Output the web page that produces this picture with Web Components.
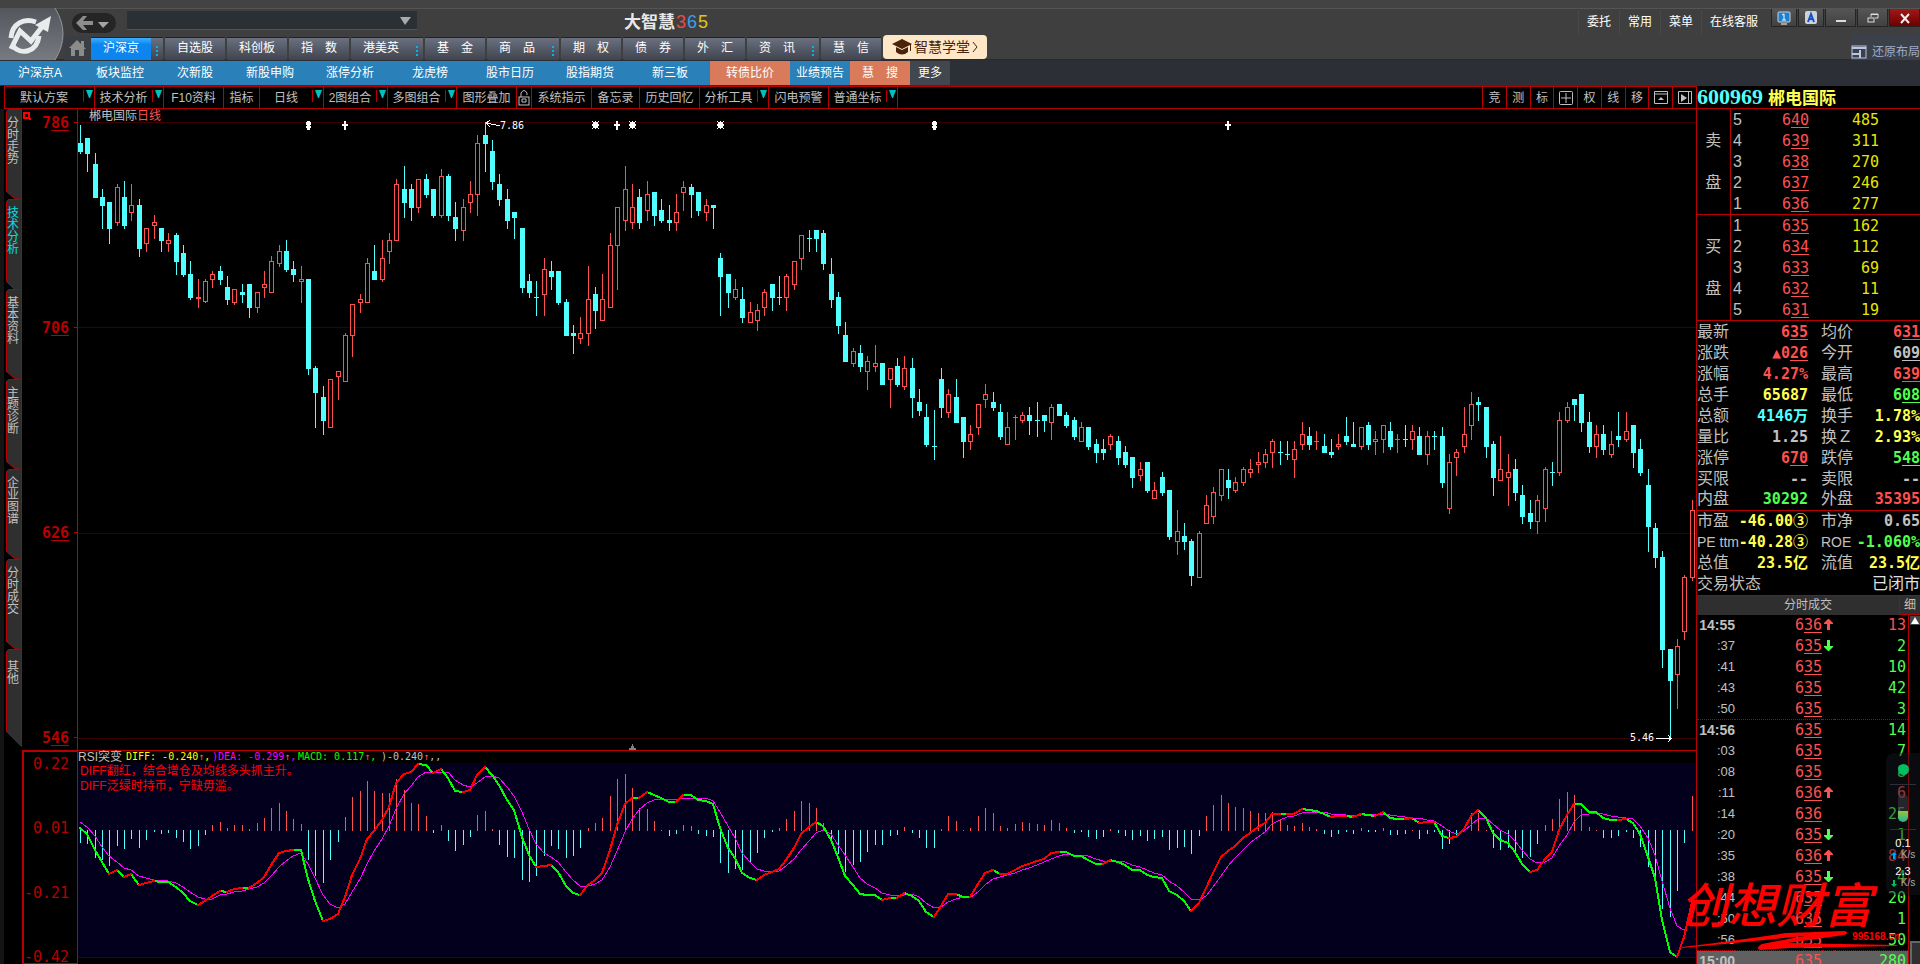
<!DOCTYPE html>
<html lang="zh-CN">
<head>
<meta charset="utf-8">
<title>大智慧365</title>
<style>
  * { box-sizing: border-box; }
  body {
    margin: 0;
    background: #000;
    font: 12px/14px "Liberation Sans", "Noto Sans CJK SC", sans-serif;
    color: #c0c0c0;
    --line: #b80000;
    --up: #ff5050;
    --down: #50ff50;
    --cyan: #50ffff;
    --mono: "DejaVu Sans Mono", "Noto Sans CJK SC", monospace;
  }
</style>
</head>
<body>
<trade-app></trade-app>

<script>
  const base = `
    <style>
      * { box-sizing: border-box; }
      button, select { font: inherit; color: inherit; background: none; border: 0; padding: 0; margin: 0; white-space: nowrap; }
      a { color: inherit; text-decoration: none; white-space: nowrap; }
    </style>`;

  class BaseElement extends HTMLElement {
    constructor() {
      super();
      this.attachShadow({ mode: "open" });
    }
    connectedCallback() {
      this.shadowRoot.innerHTML = base + this.render();
    }
  }

  // Prices are quoted in cents, the last two digits are underlined
  const price = v => `${v[0]}<u>${v.slice(1)}</u>`;

  /* ---------- header ---------- */

  class NavTab extends BaseElement {
    render() {
      const on = this.hasAttribute("active");
      const more = this.hasAttribute("more");
      return `
        <style>
          :host { display: flex; width: ${more ? 72 : 60}px; height: 23px; border-top: 1px solid #222;
            background: linear-gradient(#6b7080, #40444f); color: #fff; }
          button { flex: 1; padding-bottom: 2px; white-space: pre; ${on ? "background: linear-gradient(#3eb0ff, #0c86ee 30%);" : ""} }
          i { width: 12px; align-self: center; height: 10px; margin-top: 3px;
            background: repeating-linear-gradient(#00b4f0 0 2px, transparent 2px 4px) center / 2px 10px no-repeat; }
        </style>
        <button type="button"><slot></slot></button>${more ? "<i></i>" : ""}`;
    }
  }

  class TitleBar extends BaseElement {
    render() {
      return `
        <style>
          :host { display: flex; height: 60px; padding-top: 8px; background: #3f3f3f; border-bottom: 1px solid #2a2a2a;
            box-shadow: inset 0 8px #434343, inset 0 9px #555; color: #fff; }
          .logo { flex: none; width: 64px; height: 52px; }
          .main { flex: 1; display: flex; flex-direction: column; justify-content: space-between; min-width: 0; }
          .top { display: flex; align-items: flex-start; }
          .back { width: 44px; height: 20px; margin: 5px 0 0 8px; border-radius: 10px; background: #252525; }
          .back svg { display: block; }
          .combo { position: relative; width: 290px; margin: 3px 0 0 11px; }
          select { appearance: none; display: block; width: 100%; height: 19px; background: #2b3035; border-bottom: 1px solid #50555a; }
          .combo svg { position: absolute; right: 6px; top: 6px; pointer-events: none; }
          h1 { margin: 4px auto 0 207px; font-size: 17px; line-height: 20px; font-weight: 700; color: #e8e8e8; }
          h1 b { font-weight: 400; margin-left: 1px; font-size: 18px; }
          .menu { display: flex; margin-right: 5px; }
          .menu a { padding: 2px 8px 0; line-height: 24px; border-left: 1px solid #484848; }
          .win { display: flex; gap: 1px; padding: 1px 0 0; }
          .win button { width: 31px; height: 18px; border: 1px solid #252525; border-top: 0; background: linear-gradient(#555, #414141); }
          .win .sm { width: 26px; }
          .win .close { background: linear-gradient(#a01818, #6c0000); }
          .win svg { display: block; margin: auto; }
          .tabs { display: flex; align-items: flex-end; gap: 2px; }
          .home { width: 27px; height: 24px; background: #3a3d42; margin-right: -2px; }
          .school { display: flex; align-items: center; justify-content: center; gap: 2px; width: 104px; height: 24px; margin-bottom: 1px;
            border-radius: 4px; background: #fee7c6; color: #4a230a; font-size: 14px; }
          .layout { display: flex; align-items: center; gap: 5px; margin-left: auto; height: 26px; padding-top: 9px; color: #9eabc9; background: #3b4049; }
        </style>
        <svg class="logo" viewBox="0 0 64 52">
          <defs><linearGradient id="g" x1="0" y1="0" x2="0" y2="1"><stop offset="0" stop-color="#53575d"/><stop offset="1" stop-color="#777b81"/></linearGradient></defs>
          <path d="M0 0H55Q71 26 55 52H0Z" fill="url(#g)"/>
          <path d="M55 0Q71 26 55 52" fill="none" stroke="#92959a"/>
          <g fill="none" stroke="#e9eaec" stroke-width="5">
            <path d="M36 14C24 10 12 15 11 30"/>
            <path d="M13 38C20 47 37 45 39 28"/>
            <path d="M11 41L20 23L31 33L45 15"/>
          </g>
          <path d="M51 8L48 24L35 17Z" fill="#e9eaec"/>
        </svg>
        <div class="main">
          <div class="top">
            <button class="back" type="button" aria-label="后退"><svg width="44" height="20">
              <path d="M4 10L11 3H15L11 8H21V12H11L15 17H11Z" fill="#8d8d8d"/><path d="M26 9H37L31 15Z" fill="#a5a5a5"/></svg></button>
            <label class="combo"><select aria-label="地址"><option></option></select>
              <svg width="11" height="8"><path d="M0 0H11L5 8Z" fill="#aaa"/></svg></label>
            <h1>大智慧<b style="color:#e0504b">3</b><b style="color:#3ba0e6">6</b><b style="color:#e3c417">5</b></h1>
            <nav class="menu"><a href="#">委托</a><a href="#">常用</a><a href="#">菜单</a><a href="#">在线客服</a></nav>
            <div class="win">
              <button class="sm" type="button" aria-label="显示器"><svg width="14" height="14"><rect x="1" y="1" width="12" height="10" rx="1" fill="#1c7fd0" stroke="#c8d2dc"/><path d="M5 4L7 3V9M5 9H9M4 13H10" stroke="#fff" fill="none"/></svg></button>
              <button class="sm" type="button" aria-label="字体"><svg width="14" height="14"><rect x="1" y="0" width="12" height="13" rx="2" fill="#ccd2d8"/><path d="M4 11L7 3L10 11M5 8H9" stroke="#1450c8" stroke-width="2" fill="none"/></svg></button>
              <button type="button" aria-label="最小化"><svg width="12" height="12"><path d="M1 9H11" stroke="#ddd" stroke-width="2"/></svg></button>
              <button type="button" aria-label="还原"><svg width="12" height="12" fill="none" stroke="#ddd"><path d="M4 5V2H11V6H8M4 2.5H11"/><rect x="1" y="6" width="6" height="4"/></svg></button>
              <button class="close" type="button" aria-label="关闭"><svg width="12" height="12"><path d="M2 2L10 11M10 2L2 11" stroke="#eee" stroke-width="2"/></svg></button>
            </div>
          </div>
          <div class="tabs">
            <button class="home" type="button" aria-label="首页"><svg width="27" height="24"><path d="M5 12L13 4L17 8V5H20V11L22 13H20V20H15V14H11V20H7V12Z" fill="#8b8b8b"/></svg></button>
            <nav-tab active more>沪深京</nav-tab><nav-tab>自选股</nav-tab><nav-tab>科创板</nav-tab><nav-tab>指　数</nav-tab>
            <nav-tab more>港美英</nav-tab><nav-tab>基　金</nav-tab><nav-tab more>商　品</nav-tab><nav-tab>期　权</nav-tab>
            <nav-tab>债　券</nav-tab><nav-tab>外　汇</nav-tab><nav-tab more>资　讯</nav-tab><nav-tab>慧　信</nav-tab>
            <button class="school" type="button"><svg width="20" height="16"><path d="M0 5L10 0L20 5L10 10Z" fill="#4a230a"/><path d="M4 8L10 11L16 8V13Q10 18 4 13ZM18 5H19V12H18Z" fill="#4a230a"/></svg>智慧学堂<svg width="6" height="12"><path d="M1 1L5 6L1 11" fill="none" stroke="#4a230a"/></svg></button>
            <a class="layout" href="#"><svg width="16" height="14" fill="none" stroke="#b9c6e6"><rect x="1" y="1" width="14" height="12"/><path d="M1 3H15M1 9H9M9 5V13" stroke-width="2"/></svg>还原布局</a>
          </div>
        </div>`;
    }
  }

  class ChannelBar extends BaseElement {
    render() {
      const items = [["沪深京A"], ["板块监控"], ["次新股", 70], ["新股申购"], ["涨停分析"], ["龙虎榜"], ["股市日历"], ["股指期货"],
        ["新三板"], ["转债比价", 80, "hot"], ["业绩预告", 60], ["慧　搜", 60, "hot"], ["更多", 40, "more"]];
      return `
        <style>
          :host { display: flex; height: 26px; padding: 1px 0; background: #2c3036; color: #fff; }
          a { background: #2a80b9; line-height: 24px; text-align: center; }
          .hot { background: #d97b5b; }
          .more { background: #42464e; }
        </style>
        ${items.map(([t, w = 80, c = ""]) => `<a href="#" class="${c}" style="width:${w}px">${t}</a>`).join("")}`;
    }
  }

  /* ---------- workspace ---------- */

  class ChartToolbar extends BaseElement {
    render() {
      const items = [["默认方案", 90, 1], ["技术分析", 69, 1], ["F10资料", 60], ["指标", 36], ["日线", 64, 1], ["2图组合", 64, 1], ["多图组合", 69, 1],
        ["图形叠加", 60], ["lock", 15], ["系统指示", 60], ["备忘录", 48], ["历史回忆", 60], ["分析工具", 69, 1], ["闪电预警", 60], ["普通坐标", 69, 1]];
      const lock = `<svg width="12" height="18" fill="none" stroke="#c0c0c0"><rect x="1" y="8" width="10" height="8"/><path d="M3 8V4Q6 -1 9 4V6M4 10H8V13H4Z"/></svg>`;
      const grid = `<svg width="14" height="14" fill="none" stroke="#c0c0c0"><rect x=".5" y=".5" width="13" height="13" rx="1"/><path d="M7 2V12M2 7H12"/></svg>`;
      const top = `<svg width="14" height="14" fill="none" stroke="#c0c0c0"><path d="M.5 .5H13.5V12.5H.5ZM0 3H14"/><path d="M4 9H10L7 6Z" fill="#c0c0c0" stroke="none"/></svg>`;
      const side = `<svg width="14" height="14" fill="none" stroke="#c0c0c0"><path d="M.5 .5H13.5V12.5H.5ZM10.5 0V13"/><path d="M3 3V11L9 7Z" fill="#c0c0c0" stroke="none"/></svg>`;
      return `
        <style>
          :host { display: flex; height: 23px; margin-left: 4px; border: 1px solid var(--line); border-right: 0; }
          .cell { display: flex; align-items: center; border-right: 1px solid var(--line); }
          .cell button { flex: 1; height: 21px; padding-top: 1px; }
          .cell svg { display: block; margin: auto; }
          .arrow { width: 11px; height: 12px; margin-bottom: 3px; border-left: 1px solid var(--line); padding-left: 1px; }
          .right { display: flex; width: 214px; margin-left: auto; border-left: 1px solid var(--line); }
          .right .cell { flex: 1; }
          .right .cell:last-child { border-right: 0; }
        </style>
        ${items.map(([t, w, m]) => `<div class="cell" style="width:${w}px"><button type="button"${t === "lock" ? ' aria-label="锁定"' : ""}>${t === "lock" ? lock : t}</button>${
          m ? '<span class="arrow"><svg width="7" height="8"><path d="M0 0H7L4 8H3Z" fill="#00c0c0"/></svg></span>' : ""}</div>`).join("")}
        <div class="right">${["竞", "测", "标", grid, "权", "线", "移", top, side].map(t => `<div class="cell"><button type="button">${t}</button></div>`).join("")}</div>`;
    }
  }

  class SideTabs extends BaseElement {
    render() {
      const tabs = ["分时走势", "技术分析", "基本资料", "主题诊断", "企业图谱", "分时成交", "其他"];
      const long = "M15.5 97.5L.5 82.5V2.5L2.5 .5H15.5Z";
      const short = "M15.5 90.5L8.5 89.5L.5 82.5V2.5L2.5 .5H15.5Z";
      return `
        <style>
          :host { display: block; width: 22px; padding-left: 6px; background: linear-gradient(90deg, #141414 4px, #000 4px); }
          button { display: block; position: relative; width: 16px; height: 90px; padding: 7px 2px 0 1px; line-height: 12px; text-align: left; }
          button span { display: block; position: relative; white-space: normal; width: 12px; height: 82px; }
          button:last-child { height: 98px; }
          svg { position: absolute; left: 0; top: 0; overflow: visible; }
          .on { color: #00e0e0; }
        </style>
        ${tabs.map((t, i) => `<button type="button" class="${i === 1 ? "on" : ""}"><svg width="16" height="98"><path d="${
          i === 1 || i === 6 ? long : short}" fill="#2f2f2f" stroke="#b80000"/></svg><span>${t}</span></button>`).join("")}`;
    }
  }

  // type, high, body top, body bottom, low; three units to a pixel, measured down the pane
  const candles = `c75,129,155,162 c114,114,162,216 c159,192,293,293 c267,291,318,387 c306,306,387,432 r252,262,368,378 c243,291,378,387 r252,316,338,363
    c297,315,447,471 r384,385,431,456 r345,367,377,417 c384,384,423,456 r399,421,431,456 c399,405,486,525 c435,459,525,531 c483,522,594,600
    r537,592,598,624 r537,544,607,608 r513,523,539,564 c498,513,540,555 c528,561,600,615 r567,568,608,615 c552,576,585,609 c552,552,624,654
    r576,577,623,639 r513,553,563,594 r468,484,578,578 r435,454,491,501 c420,453,510,516 c483,507,525,546 r498,538,545,609 c537,537,807,825
    c798,804,879,984 c858,891,963,1002 r837,838,983,983 r813,814,830,900 r699,706,845,845 r612,613,707,771 r582,598,608,639 r474,490,608,608
    c435,513,540,540 r420,475,539,546 r399,421,455,492 r237,253,422,422 c198,267,309,354 c252,267,324,363 r237,238,323,339 c222,237,285,294
    c267,267,348,354 r207,229,347,354 c222,228,348,363 c306,351,387,423 r297,322,392,423 r243,283,308,339 r105,130,284,348 c66,105,132,216
    c120,153,246,270 c222,252,300,318 c267,297,363,387 c336,336,354,417 c384,384,564,579 c522,543,579,594 c543,591,594,648 r474,508,584,648
    c483,513,531,570 c513,513,609,615 c597,606,708,708 c675,699,708,762 r651,700,716,732 r498,598,701,738 c561,582,633,687 r522,598,662,662
    r399,436,623,623 r321,322,437,570 r198,268,362,393 r252,322,368,387 c267,291,369,387 r243,283,332,363 c276,276,348,378 c297,330,363,369
    c315,360,369,393 r282,337,368,393 r243,262,278,333 c252,261,285,354 c276,276,333,348 r297,316,338,363 c315,315,324,387 c459,474,531,648
    c522,522,579,624 r537,568,593,600 c561,597,654,669 r606,637,668,668 r612,631,662,693 r567,577,623,648 c552,552,594,633 c528,591,594,615
    r522,529,593,633 r483,484,554,570 r405,406,476,510 c390,414,417,456 c390,390,417,456 c390,399,492,510 c474,522,600,624 c576,591,678,702
    c666,705,786,786 r744,754,791,801 c735,759,801,816 r768,784,815,870 r735,790,800,816 c789,789,855,855 r804,805,839,924 c774,798,855,861
    r768,805,860,870 c774,804,894,954 c867,906,934,948 c912,951,1032,1038 c930,1035,1038,1077 c804,837,924,954 r867,883,938,954 c837,891,969,969
    c951,951,1023,1071 r975,1000,1022,1047 r912,913,983,1002 r852,883,899,924 c876,906,924,933 c912,936,1008,1017 r936,982,1031,1031 r945,951,954,1017
    r936,946,962,969 c921,945,963,1002 c906,960,963,1008 c945,945,963,993 r912,922,968,1017 c912,912,948,948 c936,945,978,984 c951,960,1008,1017
    r966,982,1022,1022 c981,981,1038,1047 c1014,1029,1056,1086 c1014,1044,1056,1077 r999,1006,1031,1047 c1005,1020,1071,1092 c1035,1053,1092,1101 c1068,1068,1131,1161
    r1083,1104,1125,1140 c1083,1083,1170,1176 r1143,1167,1194,1194 c1113,1128,1176,1185 c1167,1167,1308,1317 r1227,1290,1323,1362 c1266,1305,1323,1347 c1314,1320,1425,1455
    r1290,1296,1431,1431 r1182,1212,1269,1269 r1158,1173,1248,1269 r1104,1104,1185,1200 c1104,1137,1161,1194 r1128,1143,1170,1176 r1098,1104,1146,1155 r1074,1104,1116,1131
    r1053,1083,1092,1116 r1044,1059,1086,1101 r1014,1020,1056,1101 c1020,1053,1056,1092 c1020,1059,1062,1077 r1020,1044,1077,1131 r966,999,1032,1047 c981,1005,1032,1047
    r990,1020,1023,1047 c999,1035,1056,1056 c1014,1053,1062,1071 r999,1029,1038,1047 c951,1005,1023,1032 c966,1029,1038,1038 r981,982,1038,1047 c966,975,1032,1047
    r990,1014,1023,1062 r975,976,1017,1056 c966,990,1038,1047 r999,1014,1017,1056 c975,1014,1017,1038 r975,990,1017,1047 c981,1005,1062,1062 r990,1005,1062,1092
    c990,1005,1008,1047 c981,1005,1146,1161 r1059,1083,1224,1239 r1044,1053,1071,1125 r921,999,1038,1056 r876,912,978,1017 c891,906,915,963 c921,921,1038,1071
    c1020,1029,1131,1185 r1005,1104,1140,1140 r1059,1113,1131,1215 c1074,1104,1176,1200 c1152,1182,1248,1269 c1197,1236,1263,1284 r1182,1197,1263,1299 r1098,1104,1224,1263
    c1083,1113,1116,1155 r936,960,1116,1125 r906,921,963,969 c897,897,915,963 c882,882,969,993 c936,966,1038,1056 r975,999,1038,1071 c975,999,1047,1062
    r990,1029,1062,1071 c936,1005,1017,1038 r936,990,1017,1023 c975,975,1056,1101 c1014,1044,1116,1125 c1104,1152,1278,1353 c1266,1281,1371,1401 c1350,1368,1647,1701
    c1644,1644,1740,1912 r1614,1635,1722,1824 r1422,1428,1593,1617 r1197,1227,1431,1440`
    .trim().split(/\s+/).map(s => [s[0], ...s.slice(1).split(",").map(Number)]);

  const macd = [-39,-42,-84,-90,-108,-48,-57,-27,-54,-30,-6,-12,-9,-24,-36,-57,-48,-15,17,26,8,17,17,5,23,38,68,83,59,35,20,-90,-138,-159,-90,-36,
    41,101,119,149,119,113,113,155,122,83,80,44,-9,17,-33,-63,-45,-21,47,59,5,-45,-81,-84,-150,-156,-138,-78,-48,-57,-84,-78,-54,8,23,38,104,155,170,128,
    70,67,31,4,-18,-12,19,16,-12,-18,-21,-99,-129,-117,-120,-99,-69,-24,-6,10,37,61,91,85,70,25,-39,-73,-126,-105,-96,-66,-45,-45,-18,-15,13,-9,-24,-54,-54,
    7,46,31,4,10,46,70,55,16,10,22,28,25,22,19,34,25,10,-9,-6,-21,-27,-21,7,-9,-18,-30,-18,-33,-27,-21,-60,-54,-51,-72,-18,46,79,109,85,73,70,61,55,55,58,
    37,19,16,25,13,7,-12,-21,-12,-6,-12,10,-6,-6,10,-15,-15,-12,2,-27,-12,-6,-57,-42,-15,13,55,55,4,-54,-60,-54,-66,-84,-81,-42,19,37,97,118,109,67,13,4,
    -24,-24,-18,-6,-24,-51,-111,-140,-237,-261,-183,-39,106];

  const diff = [265,282,330,365,402,390,411,403,435,430,422,426,427,442,458,483,495,484,467,453,457,448,444,444,430,410,375,338,332,330,330,417,482,543,538,
    523,470,405,358,298,273,240,200,128,102,96,71,75,99,87,113,152,156,151,105,80,104,135,180,210,290,345,381,377,375,395,438,460,465,435,420,400,330,255,192,174,
    174,156,164,175,186,186,165,165,179,183,192,265,323,353,398,414,420,406,397,387,360,325,283,260,245,258,300,350,409,434,461,465,465,480,473,473,458,467,482,515,
    531,498,462,461,470,470,433,400,389,402,401,389,377,371,364,357,340,335,336,348,348,359,371,372,361,367,376,390,391,406,412,415,454,466,482,514,489,445,400,352,
    334,317,294,279,262,248,223,222,222,221,206,209,212,221,231,229,228,231,221,226,229,217,233,236,237,233,248,247,245,287,295,290,267,228,209,233,278,299,310,337,
    373,397,391,357,335,270,225,191,191,215,216,235,240,240,236,250,283,350,415,540,635,650,590,487];

  const PITCH = 7.36;
  const barX = i => Math.floor(2.4 + PITCH * i);

  class KlineChart extends BaseElement {
    render() {
      const y = v => Math.round(v / 3) - 9;
      const bars = candles.map(([t, hi, top, bot, lo], i) => {
        const x = barX(i), c = t === "c" ? "#50ffff" : "#ff5050";
        const y1 = y(hi), y2 = y(top), y3 = Math.max(y(bot), y2 + 1), y4 = y(lo);
        const body = t === "c" || y3 - y2 < 2
          ? `<rect x="${x - 2}" y="${y2}" width="5" height="${y3 - y2}" fill="${c}"/>`
          : `<rect x="${x - 1.5}" y="${y2 + .5}" width="4" height="${y3 - y2 - 1}" fill="none" stroke="${c}"/>`;
        return body + `<path d="M${x} ${y1}h1V${y2}h-1ZM${x} ${y3}h1V${Math.max(y4, y3)}h-1Z" fill="${c}"/>`;
      }).join("");
      const plus = x => `<path d="M${x - 3} 15h2v-3h2v3h2v2h-2v4h-2v-4h-2Z"/>`;
      const dia = x => `<path d="M${x - 1} 12h3v1h1v3h-1v1h1v2h-1v2h-3v-2h-1v-2h1v-1h-1v-3h1Z"/>`;
      const star = x => `<path d="M${x - 2} 13h5v6h-5ZM${x - 3} 12h1v1h-1ZM${x} 12h1v1h-1ZM${x + 3} 12h1v1h-1ZM${x - 3} 15h7v2h-7ZM${x - 3} 19h1v1h-1ZM${x} 19h1v1h-1ZM${x + 3} 19h1v1h-1Z"/>`;
      return `
        <style>
          :host { display: flex; flex: 1; min-height: 0; }
          .axis { width: 56px; display: flex; flex-direction: column; justify-content: space-between; border-right: 1px solid var(--line);
            font: 700 15px/26px var(--mono); color: #b80000; text-align: right; padding: 1px 8px 0 0; margin-bottom: -1px; position: relative; }
          .axis svg { position: absolute; left: 1px; top: 3px; }
          .axis div { position: relative; }
          .axis div::after { content: ""; position: absolute; right: -8px; top: 12px; width: 3px; height: 1px; background: var(--line); }
          u { text-underline-offset: 2px; }
          .plot { flex: 1; position: relative; min-width: 0; }
          .plot > svg { position: absolute; inset: 0; width: 100%; height: 100%; shape-rendering: crispEdges; }
          .name { position: absolute; left: 11px; top: 0; line-height: 14px; }
          .name b { color: var(--up); font-weight: 400; }
          .note { position: absolute; font: 10px/12px var(--mono); color: #fff; }
        </style>
        <div class="axis">
          <svg width="9" height="8"><path d="M1 1H6V6H1Z" fill="none" stroke="red" stroke-width="2"/><path d="M6 6H8V8H6Z" fill="red"/></svg>
          ${["786", "706", "626", "546"].map(v => `<div>${price(v)}</div>`).join("")}
        </div>
        <div class="plot">
          <svg viewBox="0 0 1618 640" preserveAspectRatio="none">
            ${[13, 218, 423, 628].map(v => `<rect x="0" y="${v}" width="1618" height="1" fill="#380000"/>`).join("")}
            ${bars}
            <g fill="#fff">${dia(230)}${plus(267)}${star(517)}${plus(539)}${star(554)}${star(642)}${dia(856)}${plus(1150)}</g>
            <path d="M409 14L422 17M408 14L412 11M408 14L412 18M1578 628.5H1593M1590 625L1593 628.5L1590 632" fill="none" stroke="#fff"/>
            <path d="M554 634h1v2h1v2h2v2h-7v-2h2v-2h1Z" fill="#808080"/>
          </svg>
          <span class="name">郴电国际<b>日线</b></span>
          <span class="note" style="left:422px;top:11px">7.86</span>
          <span class="note" style="right:42px;bottom:6px">5.46</span>
        </div>`;
    }
  }

  class MacdChart extends BaseElement {
    render() {
      const y = v => v / 3 - 11;
      const bars = macd.map((v, i) => {
        const h = Math.max(1, Math.round(Math.abs(v) / 3));
        return v > 0
          ? `<rect x="${barX(i)}" y="${80 - h}" width="1" height="${h}" fill="#ff5050"/>`
          : `<rect x="${barX(i)}" y="79" width="1" height="${h}" fill="#50ffff"/>`;
      }).join("");
      const dea = diff.map((v, i) => `${barX(i)},${Math.round(y(v + macd[i] / 2))}`).join(" ");
      let up = "", down = "";
      for (let i = 1; i < diff.length; i++) {
        const seg = `M${barX(i - 1)} ${Math.round(y(diff[i - 1]))}L${barX(i)} ${Math.round(y(diff[i]))}`;
        if (diff[i] < diff[i - 1]) up += seg; else down += seg;
      }
      return `
        <style>
          :host { display: flex; height: 214px; border-top: 1px solid var(--line); }
          .axis { width: 56px; display: flex; flex-direction: column; justify-content: space-between; border: solid var(--line); border-width: 1px 1px 1px 2px;
            font: 15px/12px var(--mono); color: #b80000; text-align: right; padding: 6px 8px 0 0; }
          .plot { flex: 1; position: relative; min-width: 0; }
          .plot > svg { position: absolute; inset: 0; width: 100%; height: 100%; shape-rendering: crispEdges; }
          .legend { position: relative; display: flex; align-items: center; height: 12px; font: 10px/12px var(--mono); white-space: pre; }
          .legend b { font-weight: 400; width: 86px; }
          .legend b:last-child { width: auto; }
          .legend .t { width: 48px; font-size: 12px; font-family: "Liberation Sans", "Noto Sans CJK SC", sans-serif; }
          .legend i { color: var(--up); font-style: normal; }
          p { position: relative; margin: 1px 0 0 2px; line-height: 14px; color: #f00; }
        </style>
        <div class="axis"><span>0.22</span><span>0.01</span><span>-0.21</span><span>-0.42</span></div>
        <div class="plot">
          <svg viewBox="0 0 1618 213" preserveAspectRatio="none">
            <rect y="12" width="1618" height="194" fill="#02001c"/>
            <rect y="206" width="1618" height="1" fill="#380000"/>
            ${bars}
            <polyline points="${dea}" fill="none" stroke="#f0f"/>
            <path d="${down}" stroke="#0f0" stroke-width="2" stroke-linecap="square"/>
            <path d="${up}" stroke="#f00" stroke-width="2" stroke-linecap="square"/>
          </svg>
          <div class="legend"><span class="t">RSI突变</span><b style="color:#ff0">DIFF: -0.240<i>↑</i>,</b><b style="color:#f0f">)DEA: -0.299<i>↑</i>,</b><b style="color:#0f0;width:83px">MACD: 0.117<i>↑</i>,</b><b>)-0.240<i>↑</i>,,</b></div>
          <p>DIFF翻红，结合增仓及均线多头抓主升。</p>
          <p>DIFF泛绿时持币，宁缺毋滥。</p>
        </div>`;
    }
  }

  /* ---------- quote panel ---------- */

  class QuotePanel extends BaseElement {
    render() {
      const ladder = (name, rows) => rows.map(([n, p, v], i) => `<tr>
        ${i ? "" : `<th rowspan="5"><div>${name[0]}</div><div>${name[1]}</div></th>`}
        <td class="n">${n}</td><td class="p">${price(p)}</td><td class="v">${v}</td></tr>`).join("");
      const sell = [[5, "640", 485], [4, "639", 311], [3, "638", 270], [2, "637", 246], [1, "636", 277]];
      const buy = [[1, "635", 162], [2, "634", 112], [3, "633", 69], [4, "632", 11], [5, "631", 19]];
      const pair = r => `<tr><th>${r[0]}</th><td class="${r[2]}">${r[1]}</td><th class="s">${r[3]}</th><td class="${r[5]}">${r[4]}</td></tr>`;
      const stats = [
        ["最新", price("635"), "up", "均价", price("631"), "up"],
        ["涨跌", "▲" + price("026"), "up", "今开", price("609"), ""],
        ["涨幅", "4.27%", "up", "最高", price("639"), "up"],
        ["总手", "65687", "ye", "最低", price("608"), "dn"],
        ["总额", "4146万", "cy", "换手", "1.78%", "ye"],
        ["量比", "1.25", "", "换Ｚ", "2.93%", "ye"],
        ["涨停", price("670"), "up", "跌停", price("548"), "dn"],
        ["买限", "--", "", "卖限", "--", ""],
        ["内盘", "30292", "dn", "外盘", "35395", "up"]];
      const value = [
        ["市盈", "-46.00③", "ye", "市净", "0.65", ""],
        ["<small>PE ttm</small>", "-40.28③", "ye", "<small>ROE</small>", "-1.060%", "dn"],
        ["总值", "23.5亿", "ye", "流值", "23.5亿", "ye"]];
      const ticks = [["14:55", "636", "↑", 13], [":37", "635", "↓", 2], [":41", "635", "", 10], [":43", "635", "", 42], [":50", "635", "", 3],
        ["14:56", "635", "", 14], [":03", "635", "", 7], [":08", "635", "", 8], [":11", "636", "↑", 6], [":14", "636", "", 25], [":20", "635", "↓", 1],
        [":35", "636", "↑", 84], [":38", "635", "↓", 4], [":44", "635", "", 20], [":50", "635", "", 1], [":56", "635", "", 50], ["15:00", "635", "", 280]];
      const arrow = a => a ? `<svg width="9" height="11"><path d="${a === "↑" ? "M4 0H5L9 4V5H6V11H3V5H0V4Z" : "M3 0H6V6H9V7L5 11H4L0 7V6H3Z"}" fill="${a === "↑" ? "#ff5050" : "#50ff50"}"/></svg>` : "";
      return `
        <style>
          :host { display: block; flex: none; width: 224px; border-left: 1px solid var(--line); }
          h2 { display: flex; gap: 5px; margin: 0; height: 23px; font: 700 22px/22px "Liberation Serif", "Noto Sans CJK SC", serif; color: var(--cyan); border-bottom: 1px solid var(--line); white-space: nowrap; }
          h2 span { font: 700 17px/22px "Noto Sans CJK SC", sans-serif; color: #ffff50; }
          table { width: 100%; table-layout: fixed; border-collapse: collapse; border-bottom: 1px solid var(--line); }
          tr { height: 21px; }
          td, th { padding: 0; font: 15px/20px var(--mono); white-space: nowrap; text-align: right; }
          th { font: 16px/20px "Liberation Sans", "Noto Sans CJK SC", sans-serif; text-align: left; }
          small { font-size: 14px; }
          u { text-underline-offset: 2px; }
          .ladder td { padding-top: 1px; }
          .ladder th { width: 33px; border-right: 1px solid var(--line); text-align: center; }
          .ladder th div { line-height: 42px; }
          .ladder .n { width: 20px; padding-right: 8px; font: 16px/20px "Liberation Sans", sans-serif; }
          .p { width: 59px; color: var(--up); }
          .v { color: #e6e600; padding-right: 41px; }
          .stats tr > :nth-child(1) { width: 34px; }
          .stats tr > :nth-child(2) { width: 77px; }
          .stats .s { width: 46px; padding-left: 13px; }
          .stats td { font-weight: 700; }
          .stats .status { text-align: right; color: #e0e0e0; }
          .val { border-bottom: 0; }
          .up { color: var(--up); } .dn { color: var(--down); } .ye { color: #ffff50; } .cy { color: var(--cyan); }
          .bar { display: flex; height: 20px; line-height: 18px; background: #2f2f2f; border-top: 1px solid var(--line); }
          .bar span { flex: 1; text-align: center; padding-left: 20px; }
          .bar button { width: 21px; border: 1px solid var(--line); border-top: 0; border-right: 0; }
          .list { display: flex; }
          .ticks { width: auto; flex: 1; border: 0; border-right: 1px solid var(--line); }
          .ticks td:nth-child(1) { width: 38px; font: 13px/20px "Liberation Sans", sans-serif; }
          .ticks .m td:nth-child(1) { font: 700 14px/20px "Liberation Sans", sans-serif; }
          .ticks td:nth-child(2) { width: 87px; color: var(--up); }
          .ticks td:nth-child(3) { width: 12px; text-align: left; padding-left: 2px; }
          .ticks td:nth-child(4) { padding-right: 2px; color: var(--down); }
          .ticks td.up { color: var(--up); }
          .ticks .dot td { border-bottom: 1px dotted var(--line); }
          .ticks .last { background: #606060; }
          .scroll { display: flex; flex-direction: column; justify-content: space-between; width: 11px; height: 351px; padding: 1px 0 0 1px; }
          .scroll i { display: block; height: 25px; border: 2px solid #666; border-width: 2px 0 0 2px; background: #303030; }
        </style>
        <h2>600969<span>郴电国际</span></h2>
        <table class="ladder">${ladder("卖盘", sell)}</table>
        <table class="ladder">${ladder("买盘", buy)}</table>
        <table class="stats">${stats.map(pair).join("")}</table>
        <table class="stats val">${value.map(pair).join("")}<tr><th colspan="2">交易状态</th><th colspan="2" class="status">已闭市</th></tr></table>
        <div class="bar"><span>分时成交</span><button type="button">细</button></div>
        <div class="list">
          <table class="ticks">${ticks.map(([t, p, a, v], i) => `<tr class="${t.length > 3 ? "m" : ""} ${i === 4 || i === 15 ? "dot" : ""} ${i === 16 ? "last" : ""}">
            <td>${t}</td><td>${price(p)}</td><td>${arrow(a)}</td><td class="${v === 13 || v === 6 || v === 84 ? "up" : ""}">${v}</td></tr>`).join("")}</table>
          <div class="scroll"><svg width="10" height="9"><rect width="10" height="9" fill="#444"/><path d="M5 1L9 8H1Z" fill="#fff"/></svg><i></i></div>
        </div>`;
    }
  }

  // Desktop network meter that floats over the window edge
  class NetMeter extends BaseElement {
    render() {
      return `
        <style>
          :host { position: absolute; right: 0; top: 753px; width: 34px; height: 142px; padding-top: 11px; border-radius: 8px 0 0 8px; background: rgba(22, 24, 30, .45);
            display: flex; flex-direction: column; align-items: center; font-size: 11px; line-height: 12px; color: #fff; }
          .dot { width: 11px; height: 11px; border-radius: 50%; background: #00bf63; }
          hr { width: 26px; margin: 9px 0; border: 0; border-top: 1px solid #2c2f36; }
          .tube { width: 10px; height: 28px; border-radius: 5px; background: linear-gradient(rgba(60, 64, 70, .5) 60%, #9ac832 60%, #1fb5a0); }
          .k { display: flex; align-items: center; gap: 4px; color: #aaa; font-size: 10px; }
          .s { margin-top: 4px; }
        </style>
        <div class="dot"></div><hr><div class="tube"></div><hr style="margin:7px 0">
        <div>0.1</div><div class="k"><svg width="6" height="7"><path d="M3 0L6 3H4V7H2V3H0Z" fill="#00a0ff"/></svg>K/s</div>
        <div class="s">2.3</div><div class="k"><svg width="6" height="7"><path d="M3 7L6 4H4V0H2V4H0Z" fill="#00bf63"/></svg>K/s</div>`;
    }
  }

  class BrandStamp extends BaseElement {
    render() {
      return `
        <style>
          :host { position: absolute; right: 20px; bottom: 13px; width: 220px; color: #f00; pointer-events: none; }
          .name { display: block; font: italic 500 48px/56px "Noto Sans CJK SC", sans-serif; white-space: nowrap; }
          .site { position: absolute; right: 0; bottom: 8px; font: 700 10px/12px "Liberation Sans", sans-serif; }
          svg { display: block; }
        </style>
        <span class="name">创想财富</span>
        <svg width="220" height="21"><path d="M2 17Q60 10 106 3L165 1Q170 3 164 5L108 13L216 15L218 16L110 18L80 20Q75 18 82 14L124 6Q64 12 2 18Z" fill="#f00"/></svg>
        <span class="site">995168.cn</span>`;
    }
  }

  class TradeApp extends BaseElement {
    render() {
      return `
        <style>
          :host { display: flex; flex-direction: column; height: 100vh; position: relative; overflow: hidden; }
          title-bar, channel-bar { flex: none; }
          main { flex: 1; display: flex; min-height: 0; }
          .work { flex: 1; display: flex; flex-direction: column; min-width: 0; }
          .panes { flex: 1; display: flex; min-height: 0; }
          .charts { flex: 1; display: flex; flex-direction: column; min-width: 0; }
        </style>
        <title-bar></title-bar>
        <channel-bar></channel-bar>
        <main>
          <div class="work">
            <chart-toolbar></chart-toolbar>
            <div class="panes">
              <side-tabs></side-tabs>
              <div class="charts">
                <kline-chart></kline-chart>
                <macd-chart></macd-chart>
              </div>
            </div>
          </div>
          <quote-panel></quote-panel>
        </main>
        <net-meter></net-meter>
        <brand-stamp></brand-stamp>`;
    }
  }

  customElements.define("nav-tab", NavTab);
  customElements.define("title-bar", TitleBar);
  customElements.define("channel-bar", ChannelBar);
  customElements.define("chart-toolbar", ChartToolbar);
  customElements.define("side-tabs", SideTabs);
  customElements.define("kline-chart", KlineChart);
  customElements.define("macd-chart", MacdChart);
  customElements.define("quote-panel", QuotePanel);
  customElements.define("net-meter", NetMeter);
  customElements.define("brand-stamp", BrandStamp);
  customElements.define("trade-app", TradeApp);
</script>
</body>
</html>
